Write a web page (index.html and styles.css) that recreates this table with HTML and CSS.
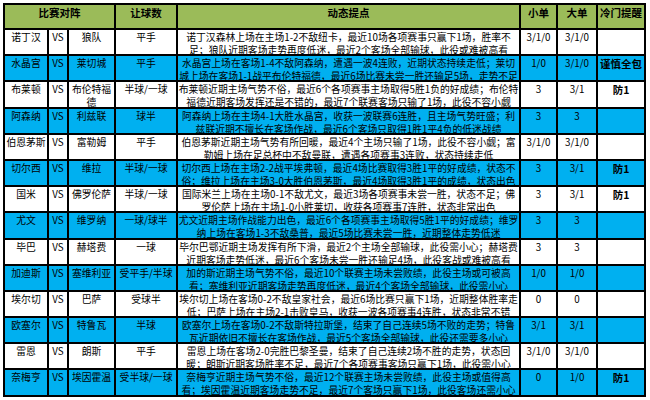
FILE: index.html
```html
<!DOCTYPE html>
<html lang="zh-CN">
<head>
<meta charset="utf-8">
<title>比赛对阵 动态提点</title>
<link rel="stylesheet" href="styles.css">
</head>
<body>
<table class="tips">
  <colgroup>
    <col class="c-home"><col class="c-vs"><col class="c-away"><col class="c-hcp">
    <col class="c-note"><col class="c-small"><col class="c-big"><col class="c-alert">
  </colgroup>
  <thead>
    <tr><th colspan="3">比赛对阵</th><th>让球数</th><th>动态提点</th><th>小单</th><th>大单</th><th>冷门提醒</th></tr>
  </thead>
  <tbody>
    <tr class="w"><td>诺丁汉</td><td>VS</td><td>狼队</td><td>平手</td><td><div class="note">诺丁汉森林上场在主场1-2不敌纽卡，最近10场各项赛事只赢下1场，胜率不<br>足；狼队近期客场走势再度低迷，最近2个客场全部输球，此役或难被高看</div></td><td>3/1/0</td><td>3/1/0</td><td></td></tr>
    <tr class="b"><td>水晶宫</td><td>VS</td><td>莱切城</td><td>平手</td><td><div class="note">水晶宫上场在客场1-4不敌阿森纳，遭遇一波4连败，近期状态持续走低；莱切<br>城上场在客场1-1战平布伦特福德，最近6场比赛未尝一胜还输足5场，走势不足</div></td><td>1/0</td><td>3/1/0</td><td class="hot">谨慎全包</td></tr>
    <tr class="w"><td>布莱顿</td><td>VS</td><td><div class="team2">布伦特福<br>德</div></td><td>半球/一球</td><td><div class="note">布莱顿近期主场气势不俗，最近6个各项赛事主场取得5胜1负的好成绩；布伦特<br>福德近期客场发挥还是不错的，最近7个联赛客场只输了1场，此役不容小觑</div></td><td>3</td><td>3/1</td><td class="hot">防1</td></tr>
    <tr class="b"><td>阿森纳</td><td>VS</td><td>利兹联</td><td>球半</td><td><div class="note">阿森纳上场在主场4-1大胜水晶宫，收获一波联赛6连胜，且主场气势旺盛；利<br>兹联近期不擅长在客场作战，最近6个客场只取得1胜1平4负的低迷战绩</div></td><td>3</td><td>3</td><td></td></tr>
    <tr class="w"><td>伯恩茅斯</td><td>VS</td><td>富勒姆</td><td>平手</td><td><div class="note">伯恩茅斯近期主场气势有所回暖，最近4个主场只输了1场，此役不容小觑；富<br>勒姆上场在足总杯中不敌曼联，遭遇各项赛事3连败，状态持续走低</div></td><td>3/1/0</td><td>3/1/0</td><td></td></tr>
    <tr class="b"><td>切尔西</td><td>VS</td><td>维拉</td><td>半球/一球</td><td><div class="note">切尔西上场在主场2-2战平埃弗顿，最近4场比赛取得3胜1平的好成绩，状态不<br>俗；维拉上场在主场3-0大胜伯恩茅斯，最近4场取得3胜1平的成绩，状态出色</div></td><td>3</td><td>3/1</td><td class="hot">防1</td></tr>
    <tr class="w"><td>国米</td><td>VS</td><td>佛罗伦萨</td><td>半球/一球</td><td><div class="note">国际米兰上场在主场0-1不敌尤文，最近3场各项赛事未尝一胜，状态不足；佛<br>罗伦萨上场在主场1-0小胜莱切，收获各项赛事7连胜，状态非常出色</div></td><td>3</td><td>3/1</td><td class="hot">防1</td></tr>
    <tr class="b"><td>尤文</td><td>VS</td><td>维罗纳</td><td>一球/球半</td><td><div class="note">尤文近期主场作战能力出色，最近6个各项赛事主场取得5胜1平的好成绩；维罗<br>纳上场在客场1-3不敌桑普，最近5场比赛未尝一胜，近期整体走势低迷</div></td><td>3</td><td>3</td><td></td></tr>
    <tr class="w"><td>毕巴</td><td>VS</td><td>赫塔费</td><td>一球</td><td><div class="note">毕尔巴鄂近期主场发挥有所下滑，最近2个主场全部输球，此役需小心；赫塔费<br>近期客场走势低迷，最近6个客场未尝一胜还输足4场，此役客战或难被高看</div></td><td>3</td><td>3</td><td></td></tr>
    <tr class="b"><td>加迪斯</td><td>VS</td><td>塞维利亚</td><td>受平手/半球</td><td><div class="note">加的斯近期主场气势不俗，最近10个联赛主场未尝败绩，此役主场或可被高<br>看；塞维利亚近期客场走势再度低迷，最近4个客场全部输球，此役需小心</div></td><td>1/0</td><td>1/0</td><td></td></tr>
    <tr class="w"><td>埃尔切</td><td>VS</td><td>巴萨</td><td>受球半</td><td><div class="note">埃尔切上场在客场0-2不敌皇家社会，最近6场比赛只赢下1场，近期整体胜率走<br>低；巴萨上场在主场2-1击败皇马，收获一波各项赛事4连胜，状态非常不错</div></td><td>0</td><td>0</td><td></td></tr>
    <tr class="b"><td>欧塞尔</td><td>VS</td><td>特鲁瓦</td><td>半球</td><td><div class="note">欧塞尔上场在客场0-2不敌斯特拉斯堡，结束了自己连续5场不败的走势；特鲁<br>瓦近期依旧不擅长在客场作战，最近5个客场全部输球，此役还需要多小心</div></td><td>3/1</td><td>3/1</td><td></td></tr>
    <tr class="w"><td>雷恩</td><td>VS</td><td>朗斯</td><td>平手</td><td><div class="note">雷恩上场在客场2-0完胜巴黎圣曼，结束了自己连续2场不胜的走势，状态回<br>暖；朗斯近期客场胜率不足，最近7个各项赛事客场只赢下1场，此役需小心</div></td><td>3/1/0</td><td>3/1/0</td><td></td></tr>
    <tr class="b"><td>奈梅亨</td><td>VS</td><td>埃因霍温</td><td>受半球/一球</td><td><div class="note">奈梅亨近期主场气势不俗，最近12个联赛主场未尝败绩，此役主场或值得高<br>看；埃因霍温近期客场走势不足，最近7个客场只赢下1场，此役客场还需小心</div></td><td>0</td><td>1/0</td><td class="hot">防1</td></tr>
  </tbody>
</table>
</body>
</html>
```

FILE: styles.css
```css
html, body {
  margin: 0;
  background: #ffffff;
}

body {
  padding: 3px 0 0 3px;
}

.tips {
  border-collapse: collapse;
  table-layout: fixed;
  width: 643px;
  font-family: "Noto Sans CJK SC", "Liberation Sans", sans-serif;
  font-size: 9.8px;
  color: #000000;
}

.c-home { width: 44px; }
.c-vs { width: 20px; }
.c-away { width: 47px; }
.c-hcp { width: 62px; }
.c-note { width: 343px; }
.c-small { width: 37px; }
.c-big { width: 40px; }
.c-alert { width: 48px; }

.tips th,
.tips td {
  border: 2px solid #000000;
  vertical-align: top;
  text-align: center;
  padding: 1px 0 0;
  line-height: 13px;
  overflow: visible;
}

.tips thead tr {
  height: 25px;
}

.tips th {
  background: #9bbb59;
  font-size: 10.5px;
  font-weight: bold;
}

.tips tbody tr {
  height: 26.2px;
}

.tips tr.w td {
  background: #ffffff;
}

.tips tr.b td {
  background: #00b0f0;
}

.note,
.team2 {
  height: 22px;
  line-height: 13px;
  white-space: nowrap;
  overflow: visible;
}

.tips td.hot {
  font-weight: bold;
  font-size: 10.5px;
}
```
